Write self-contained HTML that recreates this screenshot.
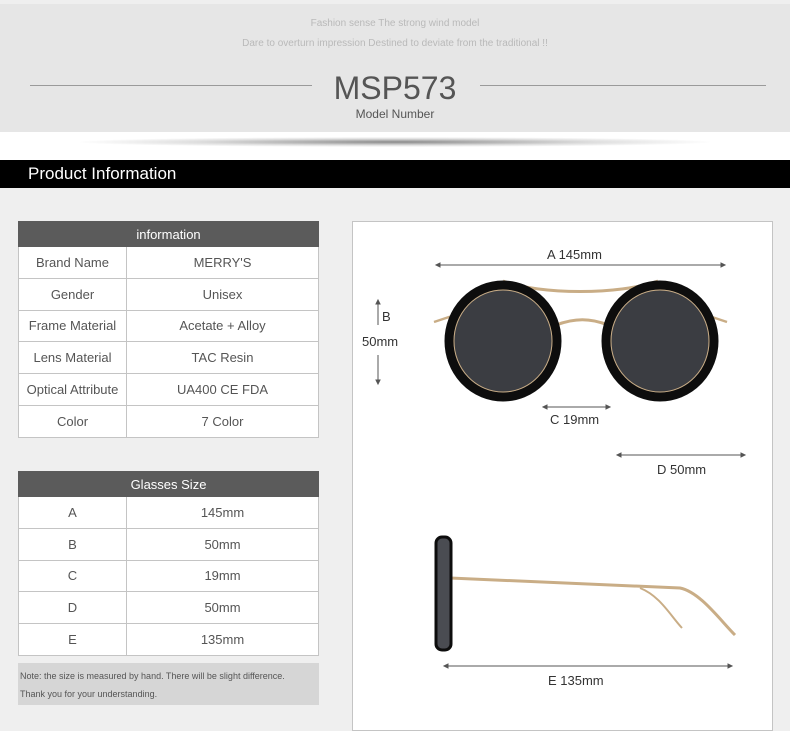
<!DOCTYPE html>
<html><head><meta charset="utf-8"><style>
*{margin:0;padding:0;box-sizing:border-box}
body{width:790px;height:723px;background:#efefef;font-family:"Liberation Sans",Arial,sans-serif;position:relative;overflow:hidden}
.abs{position:absolute}
.top{left:0;top:4px;width:790px;height:128px;background:#e6e6e6}
.white{left:0;top:132px;width:790px;height:28px;background:#fff}
.t{width:790px;text-align:center;color:#b9b9b9;font-size:10px}
table{border-collapse:collapse;position:absolute;left:18px;width:301px;background:#fff}
td{border:1px solid #c4c4c4;color:#555;font-size:13px;text-align:center;height:31.8px}
th{background:#5b5b5b;color:#fff;font-weight:normal;font-size:13px;height:25px;border:1px solid #5b5b5b}
td:first-child{width:108px}
.lbl{font-size:13px;color:#333}
</style></head><body>
<div class="abs top"></div>
<div class="abs white"></div>
<div class="abs t" style="top:18px">Fashion sense The strong wind model</div>
<div class="abs t" style="top:38px">Dare to overturn impression Destined to deviate from the traditional !!</div>
<div class="abs" style="left:30px;top:85px;width:282px;height:1px;background:#9a9a9a"></div>
<div class="abs" style="left:480px;top:85px;width:286px;height:1px;background:#9a9a9a"></div>
<div class="abs" style="left:0;top:70px;width:790px;text-align:center;font-size:32px;color:#555">MSP573</div>
<div class="abs" style="left:0;top:107px;width:790px;text-align:center;font-size:12px;color:#555">Model Number</div>
<div class="abs" style="top:137px;height:10px;border-radius:50%;background:radial-gradient(ellipse at center,#8a8a8a 0%,rgba(190,190,190,.5) 45%,rgba(255,255,255,0) 72%);left:80px;width:630px"></div>
<div class="abs" style="left:0;top:160px;width:790px;height:28px;background:#000;color:#fff;font-size:17px;padding:4px 0 0 28px">Product Information</div>

<table style="top:221px">
<tr><th colspan="2">information</th></tr>
<tr><td>Brand Name</td><td>MERRY'S</td></tr>
<tr><td>Gender</td><td>Unisex</td></tr>
<tr><td>Frame Material</td><td>Acetate + Alloy</td></tr>
<tr><td>Lens Material</td><td>TAC Resin</td></tr>
<tr><td>Optical Attribute</td><td>UA400 CE FDA</td></tr>
<tr><td>Color</td><td>7 Color</td></tr>
</table>
<table style="top:471px">
<tr><th colspan="2">Glasses Size</th></tr>
<tr><td>A</td><td>145mm</td></tr>
<tr><td>B</td><td>50mm</td></tr>
<tr><td>C</td><td>19mm</td></tr>
<tr><td>D</td><td>50mm</td></tr>
<tr><td>E</td><td>135mm</td></tr>
</table>
<div class="abs" style="left:18px;top:663px;width:301px;height:42px;background:#d6d6d6;font-size:9px;color:#555;padding:4px 0 0 2px;line-height:18px">Note: the size is measured by hand. There will be slight difference.<br>Thank you for your understanding.</div>

<div class="abs" style="left:352px;top:221px;width:421px;height:510px;background:#fff;border:1px solid #c4c4c4"></div>
<svg class="abs" style="left:0;top:0" width="790" height="723">
<g stroke="#555" stroke-width="1" fill="#555">
<line x1="436" y1="265" x2="725" y2="265"/><path d="M436 265l4-2v4z M725 265l-4-2v4z"/>
<line x1="378" y1="300" x2="378" y2="325"/><path d="M378 300l-2 4h4z"/>
<line x1="378" y1="355" x2="378" y2="384"/><path d="M378 384l-2-4h4z"/>
<line x1="543" y1="407" x2="610" y2="407"/><path d="M543 407l4-2v4z M610 407l-4-2v4z"/>
<line x1="617" y1="455" x2="745" y2="455"/><path d="M617 455l4-2v4z M745 455l-4-2v4z"/>
<line x1="444" y1="666" x2="732" y2="666"/><path d="M444 666l4-2v4z M732 666l-4-2v4z"/>
</g>
<g fill="none" stroke="#c9ad86" stroke-width="2.5">
<path d="M434 322 L452 316 M709 316 L727 322"/>
<path d="M503 281 C540 295 620 295 658 281" stroke-width="3"/>
<path d="M556 325 C575 318 590 318 608 325" stroke-width="3"/>
<path d="M450 578 L680 588 C700 592 720 620 735 635" stroke-width="3"/>
<path d="M640 588 C660 596 670 615 682 628" stroke-width="2"/>
</g>
<ellipse cx="503" cy="341" rx="54" ry="56" fill="#3b3d42" stroke="#0d0d0d" stroke-width="9"/>
<ellipse cx="660" cy="341" rx="54" ry="56" fill="#3b3d42" stroke="#0d0d0d" stroke-width="9"/>
<ellipse cx="503" cy="341" rx="49" ry="51" fill="none" stroke="#c9ad86" stroke-width="1"/>
<ellipse cx="660" cy="341" rx="49" ry="51" fill="none" stroke="#c9ad86" stroke-width="1"/>
<rect x="436" y="537" width="15" height="113" rx="6" fill="#4a4c52" stroke="#0d0d0d" stroke-width="3"/>
</svg>
<div class="abs lbl" style="left:547px;top:247px">A 145mm</div>
<div class="abs lbl" style="left:382px;top:309px">B</div>
<div class="abs lbl" style="left:362px;top:334px">50mm</div>
<div class="abs lbl" style="left:550px;top:412px">C 19mm</div>
<div class="abs lbl" style="left:657px;top:462px">D 50mm</div>
<div class="abs lbl" style="left:548px;top:673px">E 135mm</div>
</body></html>
